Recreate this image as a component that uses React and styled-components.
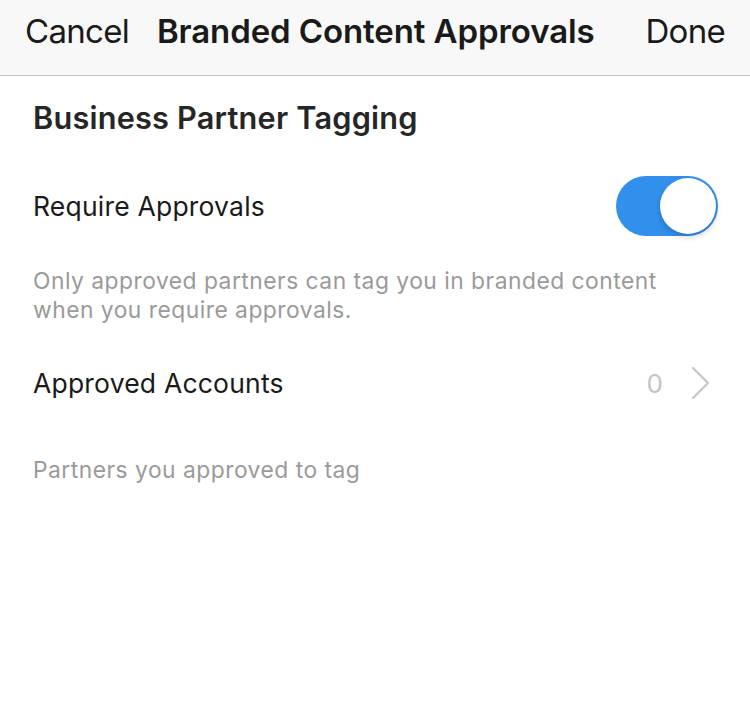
import React from 'react';
import styled, { createGlobalStyle } from 'styled-components';

const GlobalStyle = createGlobalStyle`
  body {
    margin: 0;
    background: #ffffff;
    font-family: Inter, "Open Sans", "Liberation Sans", sans-serif;
    -webkit-font-smoothing: antialiased;
  }
`;

/* --- STYLES --- */
const Screen = styled.div`
  width: 750px;
  height: 727px;
  background: #ffffff;
  overflow: hidden;
`;

const NavBar = styled.header`
  box-sizing: border-box;
  height: 76px;
  padding: 0 25px 14px 25px;
  display: flex;
  align-items: center;
  justify-content: space-between;
  background: #f8f8f8;
  border-bottom: 1.5px solid #c4c4c4;
  color: #1a1a1a;
  font-size: 33px;
`;

const NavButton = styled.span`
  font-weight: 400;
  letter-spacing: -0.7px;
`;

const NavTitle = styled.span`
  font-weight: 600;
  letter-spacing: -0.1px;
  margin-right: 23px;
`;

const Content = styled.main`
  padding: 0 33px;
`;

const SectionTitle = styled.h2`
  margin: 0;
  padding-top: 24px;
  font-size: 30.7px;
  line-height: 36px;
  font-weight: 600;
  color: #262626;
  letter-spacing: 0.2px;
`;

const Row = styled.div`
  display: flex;
  align-items: center;
  justify-content: space-between;
  height: ${p => p.height}px;
  margin-top: ${p => p.top || 0}px;
`;

const RowLabel = styled.span`
  font-size: 26.5px;
  color: #1a1a1a;
  letter-spacing: 0.2px;
`;

const Caption = styled.p`
  margin: 0;
  font-size: 22.8px;
  line-height: 29px;
  color: #9a9a9a;
  letter-spacing: 0.5px;
  padding-top: ${p => p.top || 0}px;
`;

const Toggle = styled.div`
  position: relative;
  box-sizing: border-box;
  width: 102px;
  height: 60px;
  margin-right: -1px;
  border-radius: 30px;
  background: #3290ec;
`;

const Knob = styled.div`
  position: absolute;
  top: 2px;
  right: 2px;
  width: 56px;
  height: 56px;
  border-radius: 50%;
  background: #ffffff;
  box-shadow: 0 3px 6px rgba(0, 0, 0, 0.2);
`;

const Trailing = styled.div`
  display: flex;
  align-items: center;
  gap: 28px;
  color: #c3c3c3;
  font-size: 26px;
  margin-right: 7px;
`;

/* --- Component --- */
const App = () => (
  <Screen>
    <GlobalStyle />
    <NavBar>
      <NavButton>Cancel</NavButton>
      <NavTitle>Branded Content Approvals</NavTitle>
      <NavButton>Done</NavButton>
    </NavBar>
    <Content>
      <SectionTitle>Business Partner Tagging</SectionTitle>
      <Row height={120} top={10}>
        <RowLabel>Require Approvals</RowLabel>
        <Toggle>
          <Knob />
        </Toggle>
      </Row>
      <Caption>
        Only approved partners can tag you in branded content
        <br />
        when you require approvals.
      </Caption>
      <Row height={118}>
        <RowLabel>Approved Accounts</RowLabel>
        <Trailing>
          <span>0</span>
          <svg width="19" height="34" viewBox="0 0 19 34" fill="none">
            <path d="M2 2l15 15L2 32" stroke="#c8c8c8" strokeWidth="2.4" strokeLinecap="round" strokeLinejoin="round" />
          </svg>
        </Trailing>
      </Row>
      <Caption top={13}>Partners you approved to tag</Caption>
    </Content>
  </Screen>
);

export default App;
